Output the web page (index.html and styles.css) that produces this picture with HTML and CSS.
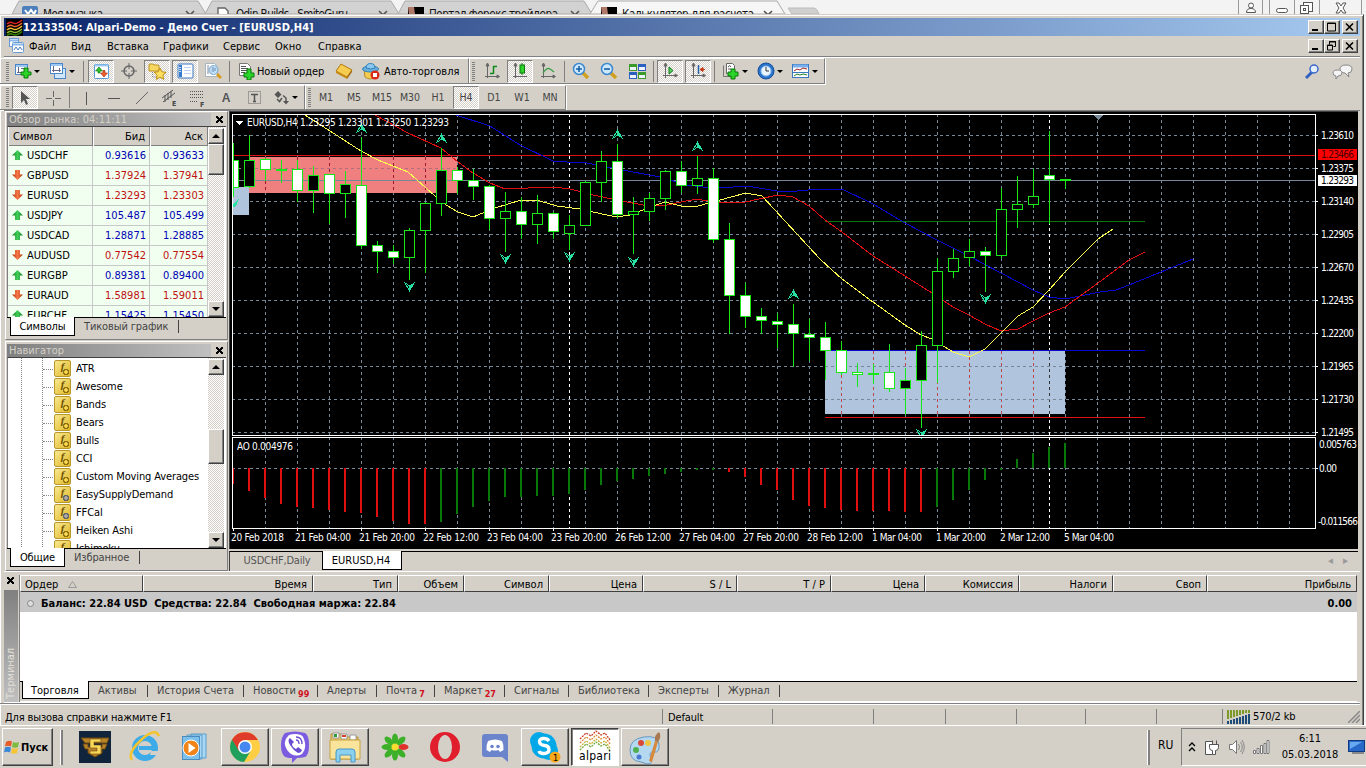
FILE: index.html
```
<!DOCTYPE html>
<html lang="ru">
<head>
    <meta charset="UTF-8">
    <title>12133504: Alpari-Demo - Демо Счет - [EURUSD,H4]</title>
    <link rel="stylesheet" href="styles.css">
</head>
<body>
    <!-- вкладки браузера за окном терминала -->
    <div class="browser">
        <svg width="1366" height="14" viewBox="0 0 1366 14">
            <path d="M12 14L19 1H198L206 14z" fill="#d2d2d2" stroke="#aaa"/>
            <path d="M205 14L212 1H391L399 14z" fill="#d2d2d2" stroke="#aaa"/>
            <path d="M398 14L405 1H584L592 14z" fill="#d2d2d2" stroke="#aaa"/>
            <path d="M590 14L598 1H777L785 14z" fill="#f6f6f6" stroke="#aaa"/>
            <path d="M788 8H814Q817 8 819 14H792z" fill="#d0d0d0" stroke="#bbb"/>
            <rect x="22" y="6" width="16" height="10" rx="2" fill="#4d80bb"/>
            <path d="M25 10l3 4 3-4 3 4 2-4" fill="none" stroke="#fff" stroke-width="2"/>
            <path d="M218 14V8h7l3 3v3" fill="#fff" stroke="#666" stroke-width="1.4"/>
            <rect x="408" y="7" width="16" height="8"/><path d="M408 7h6l1 7h-6z" fill="#b07868"/>
            <rect x="601" y="7" width="16" height="8"/><path d="M601 7h6l1 7h-6z" fill="#b07868"/>
            <g class="browser-text">
                <text x="43" y="18" textLength="60">Моя музыка</text>
                <text x="236" y="18" textLength="112">Odin Builds - SmiteGuru</text>
                <text x="429" y="18" textLength="129">Портал форекс трейдера</text>
                <text x="622" y="18" textLength="132">Калькулятор для расчета</text>
            </g>
            <path d="M186 11l4 4 4-4M379 11l4 4 4-4M571 11l4 4 4-4M764 11l4 4 4-4" fill="none" stroke="#555" stroke-width="1.6"/>
            <path d="M1238.500 0v14M1262.500 0v14M1269.500 0v14M1294.500 0v14M1319.500 0v14M1361.500 0v14" stroke="#999"/>
            <g fill="#fff" stroke="#555">
                <circle cx="1251" cy="5.500" r="2.500"/><path d="M1246.500 12.500q0-4 4.500-4t4.500 4z"/>
                <rect x="1276.500" y="8.500" width="11" height="4" rx="2"/>
                <rect x="1303.500" y="2.500" width="9" height="9"/><rect x="1300.500" y="5.500" width="8" height="8"/><rect x="1303.500" y="8.500" width="2" height="2"/>
                <path d="M1336 3h3l2 3 2-3h3l-3 5 3 5h-3l-2-3-2 3h-3l3-5z"/>
            </g>
        </svg>
    </div>

    <div class="window">
        <div class="titlebar">
            <svg class="logo" width="17" height="17" viewBox="0 0 17 17">
                <rect width="17" height="17" fill="#000"/>
                <g fill="none" stroke-width="1.500">
                    <path d="M1 5q3-3 6-1t9-3" stroke="#d22"/><path d="M1 8q3-3 6-1t9-3" stroke="#e63"/>
                    <path d="M1 11q3-3 6-1t9-3" stroke="#eb3"/><path d="M1 14q3-3 6-1t9-3" stroke="#8b3"/><path d="M1 16.500q3-3 6-1t9-3" stroke="#380"/>
                </g>
            </svg>
            <span class="title">12133504: Alpari-Demo - Демо Счет - [EURUSD,H4]</span>
            <div class="win-buttons">
                <b><svg width="14" height="12"><path d="M3 9h6" stroke="#000" stroke-width="2"/></svg></b>
                <b><svg width="14" height="12"><path d="M2.500 2v8h8V2zM2 2.500h9" fill="none" stroke="#000"/></svg></b>
                <b><svg width="14" height="12"><path d="M3 2.500l7 7M10 2.500l-7 7" stroke="#000" stroke-width="1.600"/></svg></b>
            </div>
        </div>

        <div class="menu">
            <svg width="15" height="15" viewBox="0 0 15 15"><g fill="#fff" stroke="#6a9ad4"><rect x=".5" y=".5" width="9" height="8"/><rect x="3.500" y="4.500" width="11" height="10" rx="1"/></g><path d="M1 2.500h8M4 6.500h10" stroke="#8ab8ea" stroke-width="2"/><path d="M5 12l2-3 2 3 2-3 2 3" fill="none" stroke="#4a80c0"/></svg>
            <span>Файл</span><span>Вид</span><span>Вставка</span><span>Графики</span><span>Сервис</span><span>Окно</span><span>Справка</span>
            <div class="win-buttons">
                <b><svg width="14" height="12"><path d="M3 9h6" stroke="#000" stroke-width="2"/></svg></b>
                <b><svg width="14" height="12"><path d="M4.500 4.500v-3h6v5h-2M4 2h7M2.500 5v5h5V5zM2 5.500h6" fill="none" stroke="#000"/></svg></b>
                <b><svg width="14" height="12"><path d="M3 2.500l7 7M10 2.500l-7 7" stroke="#000" stroke-width="1.600"/></svg></b>
            </div>
        </div>

        <div class="toolbars">
            <div class="toolbar standard">
                <i class="grip"></i>
                <div class="tool drop"><svg width="18" height="16"><g fill="#fff" stroke="#4a86c8"><rect x="1.500" y="1.500" width="12" height="10"/></g><path d="M2 3h11" stroke="#9cc8f4" stroke-width="2"/><path d="M4.500 4v6M3 9.500h8M7 5.500h4" stroke="#668"/><path d="M10 5h4v4h3v3h-3v3h-4v-3H7V9h3z" fill="#2bd32b" stroke="#087808"/></svg></div>
                <div class="tool drop"><svg width="18" height="18"><rect x="5.500" y="6.500" width="11" height="10" fill="#cfe6fb" stroke="#4a86c8"/><rect x="1.500" y="1.500" width="12" height="10" fill="#fff" stroke="#4a86c8"/><path d="M2 3h11" stroke="#9cc8f4" stroke-width="2"/><path d="M4.500 4v6M3 8.500h9M10.500 6v4" stroke="#668"/></svg></div>
                <i class="sep"></i>
                <div class="tool pressed"><svg width="17" height="17"><rect x="1.500" y="1.500" width="14" height="14" rx="1" fill="#fff" stroke="#5a9ad8"/><path d="M2 2.500h13" stroke="#9ccbf4" stroke-width="2"/><path d="M6 4l3.500 4H7v2H5V8H2.500z" fill="#2ec22e" stroke="#087808" stroke-width=".6"/><path d="M11 14l3.500-4H12V7.500h-2V10H7.500z" fill="#f06030" stroke="#a02000" stroke-width=".6"/></svg></div>
                <div class="tool"><svg width="16" height="16"><circle cx="8" cy="8" r="5" fill="none" stroke="#666" stroke-width="1.500"/><path d="M8 0v6M8 10v6M0 8h6M10 8h6" stroke="#666"/></svg></div>
                <div class="tool pressed"><svg width="19" height="17"><path d="M1 2q0-1 1-1h3l1 1h4q1 0 1 1v5H1z" fill="#f6d860" stroke="#c09020"/><path d="M4.500 9v5h4" fill="none" stroke="#777" stroke-dasharray="1 1"/><path d="M12 5l1.800 3.800 4.200.5-3.100 2.900.8 4.100L12 14.300l-3.700 2 .8-4.100L6 9.300l4.200-.5z" fill="#fce060" stroke="#c08c10"/></svg></div>
                <div class="tool pressed"><svg width="17" height="16"><rect x="1" y="1" width="15" height="14" rx="1" fill="#fff" stroke="#3a76c0"/><path d="M2 2h3v12H2z" fill="#3a7acc"/><path d="M2 4.500h2M2 6.500h2M2 8.500h2" stroke="#cde"/><path d="M7 4.500h7M7 7.500h7M7 10.500h7" stroke="#bcd4f4"/></svg></div>
                <div class="tool"><svg width="18" height="18"><path d="M1.500 1.500h9l3 3v10h-12z" fill="#fff" stroke="#a8b4c0"/><path d="M4 3v9M7 5v7" stroke="#889"/><circle cx="9.500" cy="8" r="4.500" fill="#b8dcf8" fill-opacity=".85" stroke="#78a8cc"/><path d="M9 5v5M11 6v3" stroke="#68a"/><path d="M13 12l4 4" stroke="#d89c20" stroke-width="3"/></svg></div>
                <i class="sep"></i>
                <div class="tool order"><svg width="17" height="18"><path d="M1.500 1.500h8l3 3v9h-11z" fill="#fff" stroke="#777"/><path d="M3 4.500h5M3 6.500h7M3 8.500h7M3 10.500h4" stroke="#555"/><path d="M9 7h4v4h3v4h-3v3H9v-3H6v-4h3z" fill="#2bd32b" stroke="#087808"/></svg>Новый ордер</div>
                <div class="tool"><svg width="18" height="16"><path d="M1 8L6 1l11 6-5 7z" fill="#f6cc50" stroke="#b07810"/><path d="M1 8l11 6v2L1 10z" fill="#c88c18"/><path d="M12 14l5-7v2l-5 7z" fill="#a06810"/></svg></div>
                <div class="tool auto"><svg width="18" height="17"><path d="M2 6l1 8q5 4 11 0l1-8z" fill="#f4cc50" stroke="#b88820"/><ellipse cx="8.500" cy="6" rx="8" ry="3" fill="#68b0e0" stroke="#3080b8"/><path d="M4 5q0-4.500 4.500-4.500T13 5q-4 2-9 0z" fill="#8cc8ee" stroke="#3080b8"/><circle cx="13" cy="12" r="4.500" fill="#dc2818"/><rect x="11" y="10" width="4" height="4" fill="#fff"/></svg>Авто-торговля</div>
            </div>
            <div class="toolbar charts">
                <i class="grip"></i>
                <div class="tool"><svg width="16" height="16"><path d="M3.500 1v14M1 13.500h14M3.500 0L2 3h3zM15.500 13.500L13 12v3z" stroke="#666" fill="#666"/><path d="M9.500 3v8M9 3.500h4M6 10.500h3" stroke="#0a8a1a" stroke-width="1.500"/></svg></div>
                <div class="tool pressed"><svg width="16" height="16"><path d="M3.500 1v14M1 13.500h14M3.500 0L2 3h3z" stroke="#666" fill="#666"/><path d="M10 0v12" stroke="#087808"/><rect x="8" y="2" width="4.500" height="8" fill="#2bd32b" stroke="#087808"/></svg></div>
                <div class="tool"><svg width="16" height="16"><path d="M3.500 1v14M1 13.500h14M3.500 0L2 3h3zM15.500 13.500L13 12v3z" stroke="#666" fill="#666"/><path d="M3 10q4-6 7-4t4 3" fill="none" stroke="#3aa04a" stroke-width="1.300"/></svg></div>
                <i class="sep"></i>
                <div class="tool"><svg width="18" height="18"><path d="M11 11l5 5" stroke="#d0a020" stroke-width="3.500"/><circle cx="7" cy="7" r="5.500" fill="#cfe8fc" stroke="#3a88d0" stroke-width="1.500"/><path d="M4 7h6M7 4v6" stroke="#1860a8" stroke-width="1.600"/></svg></div>
                <div class="tool"><svg width="18" height="18"><path d="M11 11l5 5" stroke="#d0a020" stroke-width="3.500"/><circle cx="7" cy="7" r="5.500" fill="#cfe8fc" stroke="#3a88d0" stroke-width="1.500"/><path d="M4 7h6" stroke="#1860a8" stroke-width="1.600"/></svg></div>
                <div class="tool"><svg width="17" height="17"><path d="M0 1h8v7H0zM9 9h8v7H9z" fill="#3c9a2c"/><path d="M9 1h8v7H9zM0 9h8v7H0z" fill="#2c60c0"/><path d="M1 4h6v3H1zM10 4h6v3h-6zM1 12h6v3H1zM10 12h6v3h-6z" fill="#eef4ff"/></svg></div>
                <i class="sep"></i>
                <div class="tool pressed"><svg width="16" height="16"><path d="M3.500 1v14M1 12.500h14M3.500 0L2 3h3zM15.500 12.500L13 11v3z" stroke="#666" fill="#666"/><path d="M7 4l4 3.500L7 11z" fill="#5cd05c" stroke="#0a7a1a"/></svg></div>
                <div class="tool pressed"><svg width="16" height="16"><path d="M3.500 1v14M1 12.500h14M3.500 0L2 3h3zM15.500 12.500L13 11v3z" stroke="#666" fill="#666"/><path d="M8.500 2v9" stroke="#2060a8" stroke-width="1.500"/><path d="M10 6.500h5M10 6.500l3-2v4z" stroke="#c03810" fill="#c03810"/></svg></div>
                <i class="sep"></i>
                <div class="tool drop"><svg width="18" height="18"><path d="M4.500 1.500h6l2 2v8h-8z" fill="#fff" stroke="#666"/><path d="M1.500 3.500v11h8" fill="none" stroke="#777"/><path d="M6 5q2-3 3 0M6 7h3" fill="none" stroke="#555"/><path d="M9 7h4v3h3v4h-3v3H9v-3H6v-4h3z" fill="#2bd32b" stroke="#087808"/></svg></div>
                <div class="tool drop"><svg width="18" height="18"><circle cx="9" cy="9" r="8" fill="#2a74cc" stroke="#164c98"/><circle cx="9" cy="9" r="5" fill="#eaf4ff" stroke="#8cc0f0"/><path d="M9 5v4h3" fill="none" stroke="#333"/></svg></div>
                <div class="tool drop"><svg width="18" height="16"><rect x=".5" y="1.500" width="16" height="13" fill="#fff" stroke="#3a78c0"/><path d="M1 3h15" stroke="#78b0ec" stroke-width="3"/><path d="M2 8l3-2 3 1 3-2 4 1" fill="none" stroke="#a02020"/><path d="M1 9.500h15" stroke="#3a78c0"/><path d="M2 13l3-2 3 1 3-1 4 1" fill="none" stroke="#208020"/></svg></div>
            </div>
            <div class="right-tools">
                <svg width="16" height="16"><path d="M7 8l-6 6" stroke="#3060c0" stroke-width="3"/><circle cx="9" cy="5" r="4" fill="#e4eefc" stroke="#3868c8" stroke-width="1.500"/></svg>
                <svg width="22" height="16"><path d="M8 5q0-4 6-4t6 4-4 4l1 4-4-4q-5 0-5-4z" fill="#f4f4f4" stroke="#888"/><path d="M1 9q0-3 4.500-3T10 9t-4 3l-2 3v-3q-3-.5-3-3z" fill="#f4f4f4" stroke="#888"/></svg>
            </div>
        </div>

        <div class="toolbars second">
            <div class="toolbar lines">
                <i class="grip"></i>
                <div class="tool pressed"><svg width="12" height="16"><path d="M2 1v12l3-3 2 5 2-1-2-5h4z" fill="#555"/></svg></div>
                <div class="tool"><svg width="16" height="16"><path d="M8.500 1v6M8.500 10v6M1 8.500h6M10 8.500h6" stroke="#666"/></svg></div>
                <i class="sep"></i>
                <div class="tool"><svg width="16" height="16"><path d="M8.500 2v13" stroke="#555"/></svg></div>
                <div class="tool"><svg width="16" height="16"><path d="M2 8.500h12" stroke="#555"/></svg></div>
                <div class="tool"><svg width="16" height="16"><path d="M2 14L14 2" stroke="#666"/></svg></div>
                <div class="tool"><svg width="18" height="18"><path d="M1 9L12 1M2 13L14 4M4 6v7M7 4v7M10 2v7" stroke="#555"/><text x="11" y="17" class="icon-letter">E</text></svg></div>
                <div class="tool"><svg width="18" height="18"><path d="M1 2.500h14M1 5.500h14M1 8.500h14M1 12.500h8" stroke="#555" stroke-dasharray="1 1"/><text x="11" y="18" class="icon-letter">F</text></svg></div>
                <div class="tool letter">A</div>
                <div class="tool"><svg width="15" height="15"><rect x="1.500" y="1.500" width="12" height="12" fill="none" stroke="#666" stroke-dasharray="1 1"/><path d="M4 4.500h7M7.500 4v8M6 11.500h3" stroke="#555" stroke-width="1.500"/></svg></div>
                <div class="tool drop"><svg width="16" height="16"><path d="M4 1l3.500 3.500L4 8 .5 4.500zM9 11h6l-3 3.500z" fill="#555"/><path d="M3 9l2.500 2.500L8 8M9 5.500L12 8v3" fill="none" stroke="#555" stroke-width="1.500"/></svg></div>
            </div>
            <div class="toolbar periods">
                <i class="grip"></i>
                <div class="tool">M1</div><div class="tool">M5</div><div class="tool">M15</div><div class="tool">M30</div><div class="tool">H1</div><div class="tool pressed">H4</div><div class="tool">D1</div><div class="tool">W1</div><div class="tool">MN</div>
            </div>
        </div>

        <div class="workspace">
            <div class="side">
                <div class="panel">
                    <div class="panel-title"><span>Обзор рынка: 04:11:11</span><i class="close"></i></div>
                    <div class="panel-body market">
                        <div class="quotes">
                            <div class="quote head"><span>Символ</span><span>Бид</span><span>Аск</span></div>
                            <div class="quote up"><span>USDCHF</span><span>0.93616</span><span>0.93633</span></div>
                            <div class="quote down"><span>GBPUSD</span><span>1.37924</span><span>1.37941</span></div>
                            <div class="quote down"><span>EURUSD</span><span>1.23293</span><span>1.23303</span></div>
                            <div class="quote up"><span>USDJPY</span><span>105.487</span><span>105.499</span></div>
                            <div class="quote up"><span>USDCAD</span><span>1.28871</span><span>1.28885</span></div>
                            <div class="quote down"><span>AUDUSD</span><span>0.77542</span><span>0.77554</span></div>
                            <div class="quote up"><span>EURGBP</span><span>0.89381</span><span>0.89400</span></div>
                            <div class="quote down"><span>EURAUD</span><span>1.58981</span><span>1.59011</span></div>
                            <div class="quote up"><span>EURCHF</span><span>1.15425</span><span>1.15450</span></div>
                        </div>
                        <div class="scroll"><i class="arrow top"></i><i class="thumb"></i><i class="arrow bottom"></i></div>
                    </div>
                    <div class="tabs"><span class="tab active w65">Символы</span><span class="tab">Тиковый график</span></div>
                </div>
                <div class="panel navigator">
                    <div class="panel-title"><span>Навигатор</span><i class="close"></i></div>
                    <div class="panel-body">
                        <div class="tree">
                            <div>ATR</div><div>Awesome</div><div>Bands</div><div>Bears</div><div>Bulls</div><div>CCI</div>
                            <div>Custom Moving Averages</div><div class="ext">EasySupplyDemand</div><div class="ext">FFCal</div><div>Heiken Ashi</div><div>Ichimoku</div>
                        </div>
                        <div class="scroll"><i class="arrow top"></i><i class="thumb"></i><i class="arrow bottom"></i></div>
                    </div>
                    <div class="tabs"><span class="tab active w55">Общие</span><span class="tab">Избранное</span></div>
                </div>
            </div>

            <div class="chart-area">
                <svg id="chart" width="1129" height="438" viewBox="229 111 1129 438" shape-rendering="crispEdges"></svg>
                <div class="chart-tabs"><span>USDCHF,Daily</span><span class="active">EURUSD,H4</span><i>◂</i><i>▸</i></div>
            </div>
        </div>

        <div class="terminal">
            <div class="term-side"><i class="close"></i><div class="term-name"><span>Терминал</span></div></div>
            <div class="term-main">
                <div class="orders-head">
                    <span>Ордер &nbsp;&nbsp;<svg width="9" height="7"><path d="M.5 6.500L4.500.5l4 6z" fill="none" stroke="#999"/></svg></span><span>Время</span><span>Тип</span><span>Объем</span><span>Символ</span><span>Цена</span><span>S / L</span><span>T / P</span><span>Цена</span><span>Комиссия</span><span>Налоги</span><span>Своп</span><span>Прибыль</span>
                </div>
                <div class="balance"><i></i><b>Баланс: 22.84 USD&nbsp; Средства: 22.84&nbsp; Свободная маржа: 22.84</b><b class="profit">0.00</b></div>
                <div class="orders-empty"></div>
                <div class="term-tabs">
                    <span class="active">Торговля</span><span>Активы</span><span>История Счета</span><span>Новости<sub>99</sub></span><span>Алерты</span><span>Почта<sub>7</sub></span><span>Маркет<sub>27</sub></span><span>Сигналы</span><span>Библиотека</span><span>Эксперты</span><span>Журнал</span>
                </div>
            </div>
        </div>

        <div class="status">
            <span>Для вызова справки нажмите F1</span><span>Default</span><span></span><span></span><span></span><span></span><span></span><span></span>
            <span class="traffic">
                <svg width="24" height="14"><path d="M1 0v9M4 0v8M7 0v7M10 0v6M13 0v5M16 0v4M19 0v3M22 0v3" stroke="#7c9a28" stroke-width="2"/><path d="M1 14v-3M4 14v-4M7 14V9M10 14V8M13 14V7M16 14V6M19 14V5M22 14V4" stroke="#1c4c78" stroke-width="2"/></svg>570/2 kb
                <svg class="resize" width="12" height="12"><path d="M0 12L12 0M4 12l8-8M8 12l4-4" stroke="#888" stroke-width="1.500"/></svg>
            </span>
        </div>
    </div>

    <div class="taskbar">
        <div class="start">
            <svg width="17" height="16" viewBox="0 0 17 16"><path d="M2 3q3-2 6-.5L7 7.500Q4 6 1 7.500z" fill="#e85a28"/><path d="M9 3q3 1.500 6 0l-1 5q-3 1.500-6 0z" fill="#7cbb3c"/><path d="M1 8.500Q4 7 7 8.500l-1 5q-3-1.500-6 0z" fill="#3a86d8"/><path d="M8 9q3 1.500 6 0l-1 5q-3 1.500-6 0z" fill="#f6c434"/></svg>Пуск
        </div>
        <i class="task-sep"></i>
        <div class="apps">
            <div class="app"><svg width="32" height="32"><rect width="32" height="32" fill="#10243c"/><path d="M2 7h28l-2 5H6L2 7zM4 13h5v3h14v-3h5l-2 5h-3v4l-7 4-7-4v-4H6z" fill="#b88428" stroke="#6c4810"/><path d="M11 8h11v3h-7v3h7v9H11v-3h7v-3h-7z" fill="#f8d858" stroke="#6c4810" stroke-width=".6"/></svg></div>
            <div class="app"><svg width="32" height="32"><circle cx="16" cy="17" r="10" fill="none" stroke="#3cabe8" stroke-width="6"/><path d="M10 17h17" stroke="#3cabe8" stroke-width="4"/><path d="M22 20h7v4h-8z" fill="#d4d0c8"/><path d="M3 29Q-2 22 12 9T30 5" fill="none" stroke="#f4c430" stroke-width="2.500"/></svg></div>
            <div class="app"><svg width="32" height="32"><path d="M12 3h15v24H12zM8 4h15v24H8z" fill="#a8d8f4" stroke="#5a9cc8"/><rect x="3.500" y="5.500" width="17" height="23" fill="#7cc0ec" stroke="#4a8cc0"/><circle cx="12" cy="17" r="8" fill="#f08418" stroke="#fff"/><path d="M9.500 12l7 5-7 5z" fill="#fff"/></svg></div>
            <div class="app open"><svg width="32" height="32"><circle cx="16" cy="16" r="15" fill="#ffce44"/><path d="M16 16L3 8.500A15 15 0 0 0 15 31l6-10z" fill="#1fa05c"/><path d="M3 8.500L10 20l6-11h13A15 15 0 0 0 3 8.500z" fill="#e03c2c"/><circle cx="16" cy="16" r="7" fill="#fff"/><circle cx="16" cy="16" r="5.500" fill="#4688f0"/></svg></div>
            <div class="app open"><svg width="32" height="32"><path d="M6 2q10-3 20 0 4 2 4 12t-4 12q-4 1-8 1l-5 5v-5q-6 0-8-2-3-3-3-11T6 2z" fill="#7b5ce0"/><path d="M10 4q-5 5-4 10t6 9q6 3 11 0 4-5 3-11T22 4q-6-2-12 0z" fill="#fff"/><path d="M11 7q-3 2 0 7t8 8q3 0 4-3l-4-3-2 2q-4-2-4-5l2-2z" fill="#6a4cd0"/><path d="M17 6q6 0 6 7M17 9q3 0 3 4" fill="none" stroke="#6a4cd0" stroke-width="1.300"/></svg></div>
            <div class="app open"><svg width="34" height="32"><path d="M3 3h10l2 3h15v22H3z" fill="#e8c868" stroke="#b89030"/><path d="M5 2h6v5H5zM13 3h6v5h-6zM22 4h6v5h-6z" fill="#fff" stroke="#999"/><path d="M6 3h3v3H6z" fill="#2c9c3c"/><path d="M14 4h4v2h-4z" fill="#d84030"/><path d="M2 9h30v19H2z" fill="#fae49c" stroke="#c8a040"/><path d="M8 31V21q0-3 3-3h13q3 0 3 3v10h-4v-7H12v7z" fill="#8cd0f0" stroke="#4898c8"/></svg></div>
            <div class="app"><svg width="32" height="32"><g fill="#3cb028"><ellipse cx="16" cy="8" rx="3" ry="5.500"/><ellipse cx="16" cy="24" rx="3" ry="5.500"/><ellipse cx="8" cy="16" rx="5.500" ry="3"/><g transform="rotate(45 16 16)"><ellipse cx="16" cy="7.500" rx="3" ry="5.500"/><ellipse cx="16" cy="24.500" rx="3" ry="5.500"/><ellipse cx="7.500" cy="16" rx="5.500" ry="3"/><ellipse cx="24.500" cy="16" rx="5.500" ry="3"/></g></g><ellipse cx="24.500" cy="16" rx="5" ry="3" fill="#e0302c"/><circle cx="16" cy="16" r="3.500" fill="#f8dc30"/></svg></div>
            <div class="app"><svg width="32" height="32"><ellipse cx="16" cy="16" rx="15" ry="15" fill="#e01e2c"/><ellipse cx="16" cy="16" rx="7" ry="12" fill="#d4d0c8"/></svg></div>
            <div class="app"><svg width="30" height="32"><path d="M5 3h20q3 0 3 3v25l-6-5H5q-3 0-3-3V6q0-3 3-3z" fill="#6c84cc"/><path d="M8 10q7-3 14 0 2 4 1.500 9l-3.500 2-1.500-2q-3.500 1-7 0L10 21l-3.500-2q-.5-5 1.500-9z" fill="#fff"/><circle cx="12" cy="15.500" r="1.800" fill="#6c84cc"/><circle cx="18" cy="15.500" r="1.800" fill="#6c84cc"/></svg></div>
            <div class="app open"><svg width="34" height="34"><circle cx="11" cy="11" r="9" fill="#00a8e8"/><circle cx="21" cy="21" r="9" fill="#00a8e8"/><circle cx="16" cy="16" r="12.500" fill="#00a8e8"/><path d="M21 11q-2-3-6-2.500t-3.500 3.500 5 3.500 4.500 4-4.500 4T11 21" fill="none" stroke="#fff" stroke-width="3.400"/><circle cx="27" cy="27" r="5.500" fill="#f8a818"/><text x="25" y="31" class="badge">1</text></svg></div>
            <div class="app current"><svg width="44" height="36"><g fill="none" stroke-width="1.300" stroke-dasharray="2 1"><path d="M7 10l6-6 5 3 5-5 5 4 4-2 5 7" stroke="#c83c28"/><path d="M7 14l6-6 5 3 5-5 5 4 4-2 5 7" stroke="#e08838"/><path d="M7 18l6-6 5 3 5-5 5 4 4-2 5 7" stroke="#c8b030"/><path d="M7 21l6-6 5 3 5-5 5 4 4-2 5 7" stroke="#70a838"/></g><text x="6" y="31" class="alpari" textLength="32">alpari</text></svg></div>
            <div class="app open"><svg width="34" height="34"><path d="M2 20Q2 9 16 7t15 7-5 8-3 7-10 3Q2 31 2 20z" fill="#b4d8f0" stroke="#6898c0"/><circle cx="8" cy="20" r="3" fill="#50b050"/><circle cx="13" cy="13" r="3" fill="#d84838"/><circle cx="20" cy="13" r="3" fill="#f0c840"/><circle cx="11" cy="27" r="2.500" fill="#4878d0"/><path d="M21 31l6-20 3 1-6 20z" fill="#d88838"/><path d="M27 11q-1-6 4-9 3 4-1 10z" fill="#a87850"/></svg></div>
        </div>
        <i class="task-sep tray-sep"></i>
        <span class="lang">RU</span>
        <div class="tray">
            <svg width="8" height="10"><path d="M1 4l3-3 3 3M1 9l3-3 3 3" fill="none" stroke="#000" stroke-width="1.300"/></svg>
            <svg width="16" height="17"><path d="M1.500 2.500h7v13h-7z" fill="#fff" stroke="#555"/><path d="M5.500 5.500h9v3q0 3-3 3v4h-3v-4q-3 0-3-3zM8.500 1.500v4M12.500 1.500v4" fill="#fff" stroke="#555"/></svg>
            <svg width="17" height="16"><path d="M1.500 5.500h3l4-4v13l-4-4h-3z" fill="#fff" stroke="#777"/><path d="M10.500 5q2 3 0 6M12.500 3q3.500 5 0 10M14 1q4.500 7 0 14" fill="none" stroke="#888"/></svg>
            <svg width="17" height="14"><g fill="#fff" stroke="#777"><path d="M.5 10.500h2v3h-2zM4 8.500h2v5H4zM7.500 5.500h2v8h-2zM11 3.500h2v10h-2zM14 .5h2v13h-2z"/></g></svg>
            <div class="clock">6:11<br>05.03.2018</div>
            <svg width="17" height="14"><rect x=".5" y=".5" width="16" height="11" fill="#2868c8" stroke="#123a80"/><path d="M2 2h12L2 9z" fill="#68a8f0"/><path d="M4 13h12" stroke="#888" stroke-width="2"/></svg>
        </div>
    </div>
    <script src="script.js"></script>
</body>
</html>
```
FILE: styles.css
```
* {
    box-sizing: border-box;
}
body {
    margin: 0;
    width: 1366px;
    height: 768px;
    overflow: hidden;
    display: flex;
    flex-direction: column;
    background: #f3f3f3;
    font: 11px/13px "DejaVu Sans Condensed", "DejaVu Sans", Tahoma, sans-serif;
    font-stretch: condensed;
    color: #000;
}
svg {
    display: block;
    flex: none;
}
.browser {
    height: 14px;
    overflow: hidden;
}
.browser-text {
    font-size: 11.5px;
    fill: #111;
}

/* окно */
.window {
    width: 1364px;
    height: 711px;
    padding: 3px 3px 0 4px;
    background: #d4d0c8;
    border-top: 1px solid #d4d0c8;
    border-right: 1px solid #404040;
    box-shadow: inset 1px 1px #fff, inset -1px 0 #808080;
    display: flex;
    flex-direction: column;
}
.titlebar {
    height: 18px;
    display: flex;
    align-items: center;
    background: linear-gradient(to right, #0a246a, #a6caf0);
    color: #fff;
    padding: 0 2px;
}
.title {
    font-weight: bold;
    letter-spacing: 0.06px;
}
.win-buttons {
    display: flex;
    margin-left: auto;
}
.win-buttons b {
    width: 16px;
    height: 14px;
    background: #d4d0c8;
    border: 1px solid;
    border-color: #fff #404040 #404040 #fff;
    box-shadow: inset -1px -1px #808080;
}
.win-buttons b:last-child {
    margin-left: 2px;
}
.menu {
    height: 22px;
    padding: 2px 2px 0 5px;
    display: grid;
    grid-template-columns: 20px 42px 36px 56px 60px 52px 43px 60px 1fr;
    border-bottom: 1px solid #fff;
    box-shadow: inset 0 -1px #808080;
    line-height: 17px;
}
.menu .win-buttons {
    margin-top: 1px;
}

/* панели инструментов */
.toolbars {
    height: 27px;
    margin-left: -4px;
    display: flex;
}
.toolbar {
    display: flex;
    align-items: center;
    border: 1px solid;
    border-color: #fff #808080 #808080 #fff;
    border-left: 0;
    box-shadow: 1px 1px #fff;
    height: 26px;
}
.second, .second .toolbar {
    height: 25px;
}
.grip {
    width: 3px;
    height: 19px;
    background: repeating-linear-gradient(#808080 0 1px, transparent 1px 2px);
}
.tool {
    flex: none;
    width: 26px;
    height: 23px;
    margin: 0 1px;
    display: flex;
    align-items: center;
    justify-content: center;
}
.pressed {
    border: 1px solid;
    border-color: #808080 #fff #fff #808080;
    background: repeating-conic-gradient(#fff 0 25%, #d4d0c8 0 50%) 0 0 / 2px 2px;
}
.drop {
    width: 33px;
    justify-content: flex-start;
    padding-left: 2px;
    gap: 2px;
}
.drop::after {
    content: "";
    border: 3px solid transparent;
    border-top-color: #000;
    border-bottom: 0;
}
.sep {
    flex: none;
    width: 1px;
    height: 21px;
    background: #808080;
}
.standard {
    width: 469px;
    padding-left: 6px;
}
.standard .grip {
    margin-right: 2px;
}
.standard .sep {
    margin: 0 3px 0 2px;
}
.standard .tool.order {
    width: 91px;
    margin-left: 5px;
    justify-content: flex-start;
    gap: 2px;
    white-space: nowrap;
    letter-spacing: -0.1px;
}
.standard .tool.auto {
    width: 100px;
    margin-left: 4px;
    justify-content: flex-start;
    gap: 4px;
    white-space: nowrap;
}
.charts {
    width: 356px;
    padding-left: 3px;
}
.charts .grip {
    margin-right: 3px;
}
.charts .sep {
    margin: 0 2px;
}
.charts .drop {
    padding-left: 4px;
}
.lines {
    width: 305px;
    padding-left: 6px;
}
.lines .grip {
    margin-right: 2px;
}
.lines .sep {
    margin: 0 2px;
}
.lines .drop {
    padding-left: 5px;
}
.periods {
    width: 261px;
    padding-left: 3px;
    color: #444;
    font-size: 10.5px;
}
.periods .grip {
    margin-right: 1px;
}
.letter {
    font: bold 12px "Liberation Sans", sans-serif;
    color: #555;
}
.icon-letter {
    font-size: 7px;
    font-weight: bold;
    fill: #444;
}
.right-tools {
    margin-left: auto;
    display: flex;
    align-items: center;
    gap: 11px;
    padding-right: 6px;
}

/* рабочая область */
.workspace {
    height: 461px;
    display: flex;
    border-top: 1px solid #808080;
}
.side {
    width: 225px;
    padding-left: 1px;
}
.panel {
    width: 223px;
    height: 229px;
    padding: 0 1px;
    border: 1px solid;
    border-color: #fff #808080 #808080 #fff;
    margin-bottom: 1px;
}
.navigator {
    height: 230px;
    padding-top: 1px;
}
.panel-title {
    height: 14px;
    display: flex;
    align-items: center;
    color: #d4d0c8;
}
.panel-title span {
    width: 204px;
    height: 13px;
    padding-left: 2px;
    background: linear-gradient(to right, #808080, #c0c0c0);
}
.close {
    width: 7px;
    height: 7px;
    margin-left: 5px;
    background:
        linear-gradient(45deg, transparent 42%, #000 42% 58%, transparent 58%),
        linear-gradient(-45deg, transparent 42%, #000 42% 58%, transparent 58%);
}
.panel-body {
    height: 191px;
    display: flex;
    overflow: hidden;
    background: #fff;
    border-top: 1px solid #404040;
    border-left: 1px solid #808080;
}
.quotes {
    width: 200px;
}
.quote {
    display: grid;
    grid-template-columns: 85px 57px 58px;
    height: 20px;
    text-align: right;
    line-height: 20px;
    background: #f0fff0;
    border-bottom: 1px solid #c8c8c8;
}
.quote span {
    padding-right: 3px;
    border-right: 1px solid #c8c8c8;
}
.quote span:first-child {
    text-align: left;
    padding-left: 4px;
    color: #000;
}
.quote.up {
    color: #0000b4;
}
.quote.down {
    color: #c01010;
}
.quote.up span:first-child::before, .quote.down span:first-child::before {
    content: "";
    display: inline-block;
    width: 11px;
    height: 10px;
    margin-right: 4px;
    vertical-align: -1px;
    background: linear-gradient(to right, #0c7820, #40d058, #0c7820);
    clip-path: polygon(50% 0, 100% 55%, 72% 55%, 72% 100%, 28% 100%, 28% 55%, 0 55%);
}
.quote.down span:first-child::before {
    background: linear-gradient(to right, #b02c08, #f87848, #b02c08);
    transform: rotate(180deg);
}
.quote.head {
    height: 19px;
    line-height: 20px;
    background: #d4d0c8;
    border-bottom: 1px solid #808080;
}
.quote.head span {
    border-right-color: #808080;
    border-left: 1px solid #fff;
    padding-right: 4px;
}
.scroll {
    flex: none;
    width: 16px;
    padding-top: 1px;
    display: flex;
    flex-direction: column;
    background: repeating-conic-gradient(#fff 0 25%, #d4d0c8 0 50%) 0 0 / 2px 2px;
}
.arrow, .thumb {
    height: 16px;
    background: #d4d0c8;
    border: 1px solid;
    border-color: #fff #404040 #404040 #fff;
    box-shadow: inset -1px -1px #808080;
    display: flex;
    align-items: center;
    justify-content: center;
}
.arrow::after {
    content: "";
    border: 4px solid transparent;
    border-top: 0;
    border-bottom-color: #000;
}
.arrow.bottom {
    margin-top: auto;
}
.arrow.bottom::after {
    transform: rotate(180deg);
}
.thumb {
    height: 31px;
}
.navigator .thumb {
    height: 35px;
    margin-top: 54px;
}
.tabs {
    height: 20px;
    display: flex;
    border-top: 1px solid #000;
    color: #444;
    padding-left: 3px;
}
.tab {
    height: 17px;
    line-height: 17px;
    padding: 0 9px;
    white-space: nowrap;
    letter-spacing: -0.12px;
}
.tab:not(.active)::after {
    content: "";
    border-right: 1px solid #444;
    margin-left: 10px;
}
.tab.active {
    margin-top: -1px;
    height: 19px;
    line-height: 19px;
    padding: 0;
    text-align: center;
    color: #000;
    background: #fff;
    border: 1px solid #000;
    border-top: 0;
}
.w65 {
    width: 65px;
}
.w55 {
    width: 55px;
}
.tree {
    width: 200px;
    padding-top: 1px;
    background:
        repeating-linear-gradient(#888 0 1px, transparent 1px 2px) 13px 0 / 1px 100% no-repeat,
        repeating-linear-gradient(#888 0 1px, transparent 1px 2px) 34px 0 / 1px 100% no-repeat;
}
.tree div {
    height: 18px;
    line-height: 19px;
    padding-left: 35px;
    display: flex;
    white-space: nowrap;
    letter-spacing: -0.12px;
}
.tree div::before {
    content: "f";
    flex: none;
    width: 15px;
    height: 15px;
    margin: 1px 5px 0 0;
    background:
        radial-gradient(circle at 11px 11px, #f8d850 1.5px, #907010 2px 3px, transparent 3px),
        linear-gradient(135deg, #f8e890, #e0b828);
    border: 1px solid #b89828;
    border-radius: 2px;
    font: italic bold 11px/11px "Liberation Serif", serif;
    text-align: center;
    color: #705000;
    order: -1;
}
.tree .ext::before {
    background:
        radial-gradient(circle at 11px 11px, #aaa 1.5px, #666 2px 3px, transparent 3px),
        linear-gradient(135deg, #f8e890, #e0b828);
}
.tree div::after {
    content: "";
    flex: none;
    width: 10px;
    height: 10px;
    margin-right: 1px;
    border-bottom: 1px dotted #888;
    order: -2;
}

/* график */
.chart-area {
    width: 1129px;
}
.chart-area > svg {
    background: #000;
}
#chart text {
    font-size: 10px;
    fill: #fff;
}
.chart-tabs {
    height: 21px;
    margin-top: 2px;
    border-top: 1px solid #000;
    border-left: 1px solid #404040;
    display: flex;
    color: #555;
    line-height: 18px;
}
.chart-tabs span {
    width: 92px;
    padding-left: 2px;
    text-align: center;
    letter-spacing: -0.2px;
}
.chart-tabs .active {
    width: 80px;
    height: 19px;
    margin-top: -1px;
    padding: 0 2px 0 0;
    line-height: 19px;
    letter-spacing: 0;
    color: #000;
    background: #fff;
    border: 1px solid #000;
    border-top: 0;
}
.chart-tabs i {
    font-style: normal;
    color: #999;
    width: 15px;
}
.chart-tabs .active + i {
    margin-left: auto;
}

/* терминал */
.terminal {
    height: 132px;
    padding-top: 3px;
    display: flex;
    border-top: 1px solid #fff;
    border-bottom: 1px solid #fff;
}
.term-side {
    width: 15px;
}
.term-side .close {
    display: block;
    margin: 2px 0 6px 3px;
}
.term-name {
    width: 14px;
    height: 112px;
    display: flex;
    align-items: center;
    background: linear-gradient(to top, #808080, #c0c0c0);
    color: #e4e0d8;
    writing-mode: vertical-rl;
    transform: rotate(180deg);
    padding-top: 3px;
    line-height: 14px;
}
.term-main {
    width: 1338px;
    border-left: 1px solid #808080;
}
.orders-head {
    height: 17px;
    display: grid;
    grid-template-columns: 123px 170px 85px 66px 85px 94px 94px 94px 94px 94px 94px 94px 1fr;
    text-align: right;
    line-height: 18px;
}
.orders-head span {
    border: 1px solid;
    border-color: #fff #404040 #404040 #fff;
    padding: 0 5px 0 4px;
    height: 17px;
}
.orders-head span:first-child {
    text-align: left;
}
.orders-head svg {
    display: inline-block;
}
.balance {
    height: 20px;
    display: flex;
    align-items: center;
    background: #c8c8c8;
    padding: 2px 5px 0 7px;
}
.balance i {
    width: 7px;
    height: 7px;
    border: 1px solid #888;
    border-radius: 50%;
    background: #ddd;
    margin-right: 7px;
}
.profit {
    margin-left: auto;
}
.orders-empty {
    height: 69px;
    background: #fff;
}
.term-tabs {
    height: 21px;
    border-top: 1px solid #000;
    border-bottom: 1px solid #fff;
    padding-left: 2px;
    display: grid;
    grid-template-columns: 67px 59px 96px 74px 59px 58px 70px 64px 80px 70px 61px;
    color: #444;
    line-height: 17px;
}
.term-tabs span {
    height: 12px;
    margin-top: 3px;
    line-height: 12px;
    padding-left: 9px;
    border-right: 1px solid #444;
    white-space: nowrap;
}
.term-tabs .active {
    height: 18px;
    line-height: 19px;
    margin-top: -1px;
    padding-left: 8px;
    background: #fff;
    color: #000;
    border: 1px solid #000;
    border-top: 0;
}
.term-tabs sub {
    font-size: 9px;
    font-weight: bold;
    line-height: 0;
    color: #d01020;
    margin-left: 2px;
    vertical-align: -3px;
}
.status {
    height: 21px;
    margin-left: -4px;
    border-top: 1px solid #808080;
    box-shadow: inset 0 1px #fff;
    padding-top: 5px;
    display: grid;
    grid-template-columns: 663px 110px 101px 72px 71px 69px 71px 66px 1fr;
}
.status span {
    padding-left: 5px;
    border-right: 1px solid #808080;
    height: 15px;
    line-height: 17px;
    letter-spacing: -0.15px;
}
.status .traffic {
    display: flex;
    align-items: center;
    gap: 2px;
    padding-left: 4px;
    border: 0;
}
.resize {
    margin-left: auto;
}

/* панель задач */
.taskbar {
    height: 43px;
    background: #d4d0c8;
    border-top: 1px solid #fff;
    padding: 2px 0 2px 2px;
    display: flex;
}
.start, .app.open {
    border: 1px solid;
    border-color: #fff #404040 #404040 #fff;
    box-shadow: inset -1px -1px #808080;
}
.start {
    width: 51px;
    height: 38px;
    display: flex;
    align-items: center;
    font-weight: bold;
    padding-left: 1px;
}
.task-sep {
    width: 3px;
    height: 35px;
    margin: 2px 0 0 7px;
    border-left: 1px solid #fff;
    border-right: 2px solid #808080;
}
.apps {
    display: flex;
    margin-left: 8px;
    gap: 2px;
}
.app {
    width: 48px;
    height: 38px;
    display: flex;
    align-items: center;
    justify-content: center;
}
.app.current {
    background: #fff;
    border: 1px solid;
    border-color: #404040 #fff #fff #404040;
    box-shadow: inset 1px 1px #808080;
}
.badge {
    font-size: 9px;
}
.alpari {
    font-size: 12px;
}
.tray-sep {
    margin-left: auto;
}
.lang {
    width: 31px;
    padding: 11px 0 0 8px;
    font-size: 12px;
}
.tray {
    width: 185px;
    height: 38px;
    border: 1px solid;
    border-color: #808080 #fff #fff #808080;
    border-right: 0;
    display: flex;
    align-items: center;
    padding-left: 6px;
    gap: 8px;
    overflow: hidden;
}
.clock {
    width: 60px;
    margin-left: 2px;
    text-align: center;
    line-height: 16px;
    flex: none;
}
```
FILE: script.js
```
const NS = 'http://www.w3.org/2000/svg';
const chart = document.getElementById('chart');

function add(tag, attrs, text) {
    const el = document.createElementNS(NS, tag);
    for (const key in attrs) el.setAttribute(key, attrs[key]);
    if (text) el.textContent = text;
    chart.appendChild(el);
    return el;
}
function rect(x, y, width, height, fill) {
    add('rect', { x, y, width, height, fill });
}
function vline(x, y1, y2, color) {
    rect(x, y1, 1, y2 - y1 + 1, color);
}
function hline(x1, x2, y, color) {
    rect(x1, y, x2 - x1 + 1, 1, color);
}
function dashes(x1, y1, x2, y2, stroke) {
    const v = x1 === x2 ? 0.5 : 0;
    const h = y1 === y2 ? 0.5 : 0;
    add('line', { x1: x1 + v, y1: y1 + h, x2: x2 + v, y2: y2 + h, stroke, 'stroke-dasharray': '3 3' });
}

const LEFT = 232, RIGHT = 1315, TOP = 114, BOTTOM = 435, SUB_TOP = 437, SUB_BOTTOM = 528, ZERO = 468;
const GREEN = '#18e818', GRID = '#778899';

// [high, low, top, bottom, bull] шаг 16px, bull = пустая свеча
const candles = [
    [143, 196, 160, 187, 0], [135, 187, 160, 186, 1], [158, 180, 159, 169, 0], [160, 182, 170, 170, 1],
    [160, 201, 169, 190, 0], [166, 212, 175, 190, 1], [174, 223, 174, 193, 0], [171, 217, 184, 193, 1],
    [137, 248, 185, 245, 0], [241, 272, 245, 251, 0], [245, 263, 251, 257, 0], [228, 279, 230, 257, 1],
    [202, 272, 203, 230, 1], [148, 215, 170, 203, 1], [167, 193, 170, 180, 0], [169, 199, 180, 186, 0],
    [185, 229, 186, 218, 0], [192, 251, 211, 218, 1], [197, 238, 211, 224, 0], [195, 243, 213, 224, 1],
    [212, 238, 213, 231, 0], [215, 249, 225, 233, 1], [181, 225, 182, 225, 1], [151, 201, 161, 182, 1],
    [144, 217, 161, 214, 0], [197, 253, 211, 214, 1], [193, 220, 198, 211, 1], [170, 209, 171, 198, 1],
    [161, 192, 171, 185, 0], [156, 193, 178, 185, 1], [168, 242, 178, 239, 0], [223, 333, 239, 295, 0],
    [283, 327, 295, 316, 0], [308, 333, 316, 320, 0], [313, 347, 321, 324, 0], [304, 366, 324, 333, 0],
    [319, 360, 334, 337, 0], [322, 379, 337, 350, 0], [341, 374, 350, 372, 0], [363, 386, 372, 374, 0],
    [364, 383, 374, 374, 1], [344, 391, 372, 388, 0], [368, 414, 380, 388, 1], [331, 427, 345, 380, 1],
    [258, 382, 271, 345, 1], [249, 277, 258, 271, 1], [239, 265, 251, 257, 1], [247, 291, 251, 255, 0],
    [188, 257, 209, 255, 1], [176, 227, 204, 209, 1], [169, 207, 196, 204, 1], [131, 223, 175, 179, 0],
    [180, 188, 180, 180, 1]
];

// фон: сетка и зоны
for (let x = 265; x < RIGHT; x += 32) {
    dashes(x, TOP, x, BOTTOM, GRID);
    dashes(x, SUB_TOP, x, SUB_BOTTOM, GRID);
}
for (let y = 135; y < BOTTOM; y += 33) dashes(LEFT, y, RIGHT, y, GRID);
dashes(LEFT, ZERO, RIGHT, ZERO, GRID);
[569, 1049].forEach(x => {
    dashes(x, TOP, x, BOTTOM, '#fff');
    dashes(x, SUB_TOP, x, SUB_BOTTOM, '#fff');
});
rect(249, 157, 208, 36, '#f08080');
rect(232, 187, 17, 28, '#b0c4de');
rect(825, 351, 240, 63, '#b0c4de');
for (let x = 265; x < 457; x += 32) dashes(x, 157, x, 193, '#a01830');
for (let x = 841; x < 1065; x += 32) dashes(x, 351, x, 414, '#c04848');
dashes(1049, 351, 1049, 414, '#333');
dashes(249, 168, 457, 168, '#b07080');
dashes(825, 366, 1065, 366, '#778899');
dashes(825, 399, 1065, 399, '#778899');

hline(LEFT, RIGHT, 155, '#e01010');
hline(LEFT, RIGHT, 180, '#778899');
hline(825, 1144, 221, '#087808');
hline(825, 1144, 350, '#0808d0');
hline(825, 1144, 417, '#e01010');

// скользящие средние
const blue = '456,115 490,126 520,145 553,161 567,162 587,163 617,169 660,177 687,185 703,187 720,188 747,186 777,191 797,191 820,189 842,189 873,204 905,223 937,240 969,256 1001,273 1033,290 1049,297 1065,299 1100,292 1116,290 1129,285 1161,272 1193,259';
const red = '375,115 408,133 441,148 458,162 473,173 490,183 505,189 528,188 553,187 570,189 593,195 617,200 648,206 667,205 681,202 697,199 713,202 728,203 745,202 778,195 793,197 809,206 825,220 842,232 873,256 905,276 932,293 953,307 969,315 985,324 1001,331 1018,329 1033,321 1049,313 1065,307 1098,283 1129,260 1145,252';
const yellow = '305,115 330,131 361,151 378,160 408,172 435,196 446,205 458,212 473,217 495,208 521,200 540,201 557,206 580,209 602,214 617,217 630,215 653,206 665,202 681,206 698,206 720,200 746,193 762,196 820,259 842,279 873,302 905,325 921,335 932,339 953,352 969,357 985,349 1001,333 1018,316 1033,307 1049,290 1065,272 1098,239 1113,229';
[[blue, '#0808d0'], [red, '#e01010'], [yellow, '#ffff50']].forEach(([points, stroke]) => {
    add('polyline', { points, stroke, fill: 'none' });
});

// свечи
candles.forEach(([high, low, top, bottom, bull], i) => {
    const x = 233 + i * 16;
    const left = Math.max(x - 5, LEFT + 1);
    vline(x, high, low, GREEN);
    if (top === bottom) {
        rect(x - 5, top - 1, 11, 2, GREEN);
    } else {
        rect(left, top, x + 6 - left, bottom - top + 1, GREEN);
        rect(left + 1, top + 1, x + 4 - left, bottom - top - 1, bull ? '#000' : '#fff');
    }
});

// фракталы
const fractal = (x, y, up) => add('path', {
    d: 'M.5-5L6 5 1 1.500-5 5z M-.5-1L-3 3-.5 1z',
    'fill-rule': 'evenodd',
    fill: '#28e0a0',
    transform: `translate(${x} ${y})${up ? '' : ' scale(1 -1)'}`
});
[[361, 128], [441, 138], [617, 134], [697, 146], [793, 294]].forEach(([x, y]) => fractal(x, y, true));
[[409, 287], [505, 259], [569, 257], [633, 262], [985, 299], [921, 434]].forEach(([x, y]) => fractal(x, y, false));
add('path', { d: 'M233 204l6-5-3 7-3 1z', fill: '#28e0a0' });
add('path', { d: 'M1093 115h10l-5 5z', fill: GRID });

// AO
const ao = [484, 491, 498, 504, 507, 508, 510, 512, 513, 517, 521, 524, 524, 522, 514, 507, 501, 497, 497, 496, 496, 494, 490, 485, 481, 479, 476, 474, 472, 470, 470, 472, 477, 485, 490, 500, 506, 508, 510, 511, 511, 511, 512, 512, 507, 500, 490, 480, 470, 459, 453, 447, 443];
ao.forEach((y, i) => {
    const isRed = i < 13 || (i > 30 && i < 44);
    rect(232 + i * 16, Math.min(y, ZERO), 2, Math.abs(y - ZERO), isRed ? '#e01010' : '#087808');
});

// рамки и шкалы
rect(229, 436, 1087, 1, '#000');
rect(229, 529, 1129, 20, '#000');
[TOP, BOTTOM, SUB_TOP, SUB_BOTTOM].forEach(y => hline(LEFT, RIGHT, y, '#fff'));
[LEFT, RIGHT].forEach(x => {
    vline(x, TOP, BOTTOM, '#fff');
    vline(x, SUB_TOP, SUB_BOTTOM, '#fff');
});
rect(229, 111, 1129, 1, '#404040');
rect(229, 111, 1, 438, '#404040');

['1.23610', '1.23375', '1.23140', '1.22905', '1.22670', '1.22435', '1.22200', '1.21965', '1.21730', '1.21495'].forEach((t, i) => {
    hline(RIGHT, RIGHT + 2, 135 + i * 33, '#fff');
    add('text', { x: 1321, y: 139 + i * 33, textLength: 33 }, t);
});
rect(1318, 149, 39, 11, '#f00');
add('text', { x: 1321, y: 158, textLength: 33, style: 'fill:#400' }, '1.23466');
rect(1318, 175, 39, 11, '#fff');
add('text', { x: 1321, y: 184, textLength: 33, style: 'fill:#000' }, '1.23293');
add('text', { x: 1319, y: 448, textLength: 38 }, '0.005763');
add('text', { x: 1319, y: 472, textLength: 18 }, '0.00');
add('text', { x: 1318, y: 525, textLength: 40 }, '-0.011566');
hline(RIGHT, RIGHT + 2, ZERO, '#fff');

['20 Feb 2018', '21 Feb 04:00', '21 Feb 20:00', '22 Feb 12:00', '23 Feb 04:00', '23 Feb 20:00', '26 Feb 12:00', '27 Feb 04:00', '27 Feb 20:00', '28 Feb 12:00', '1 Mar 04:00', '1 Mar 20:00', '2 Mar 12:00', '5 Mar 04:00'].forEach((t, i) => {
    vline(233 + i * 64, SUB_BOTTOM, SUB_BOTTOM + 2, '#fff');
    add('text', { x: 231 + i * 64 + (i > 9 ? 1 : 0), y: 541, textLength: i === 0 ? 53 : i > 9 ? 50 : 56 }, t);
});
add('path', { d: 'M236 121h7l-3.500 4z', fill: '#fff' });
add('text', { x: 247, y: 126, textLength: 202, 'xml:space': 'preserve' }, 'EURUSD,H4  1.23295 1.23301 1.23250 1.23293');
add('text', { x: 237, y: 450, textLength: 56 }, 'AO 0.004976');
```
